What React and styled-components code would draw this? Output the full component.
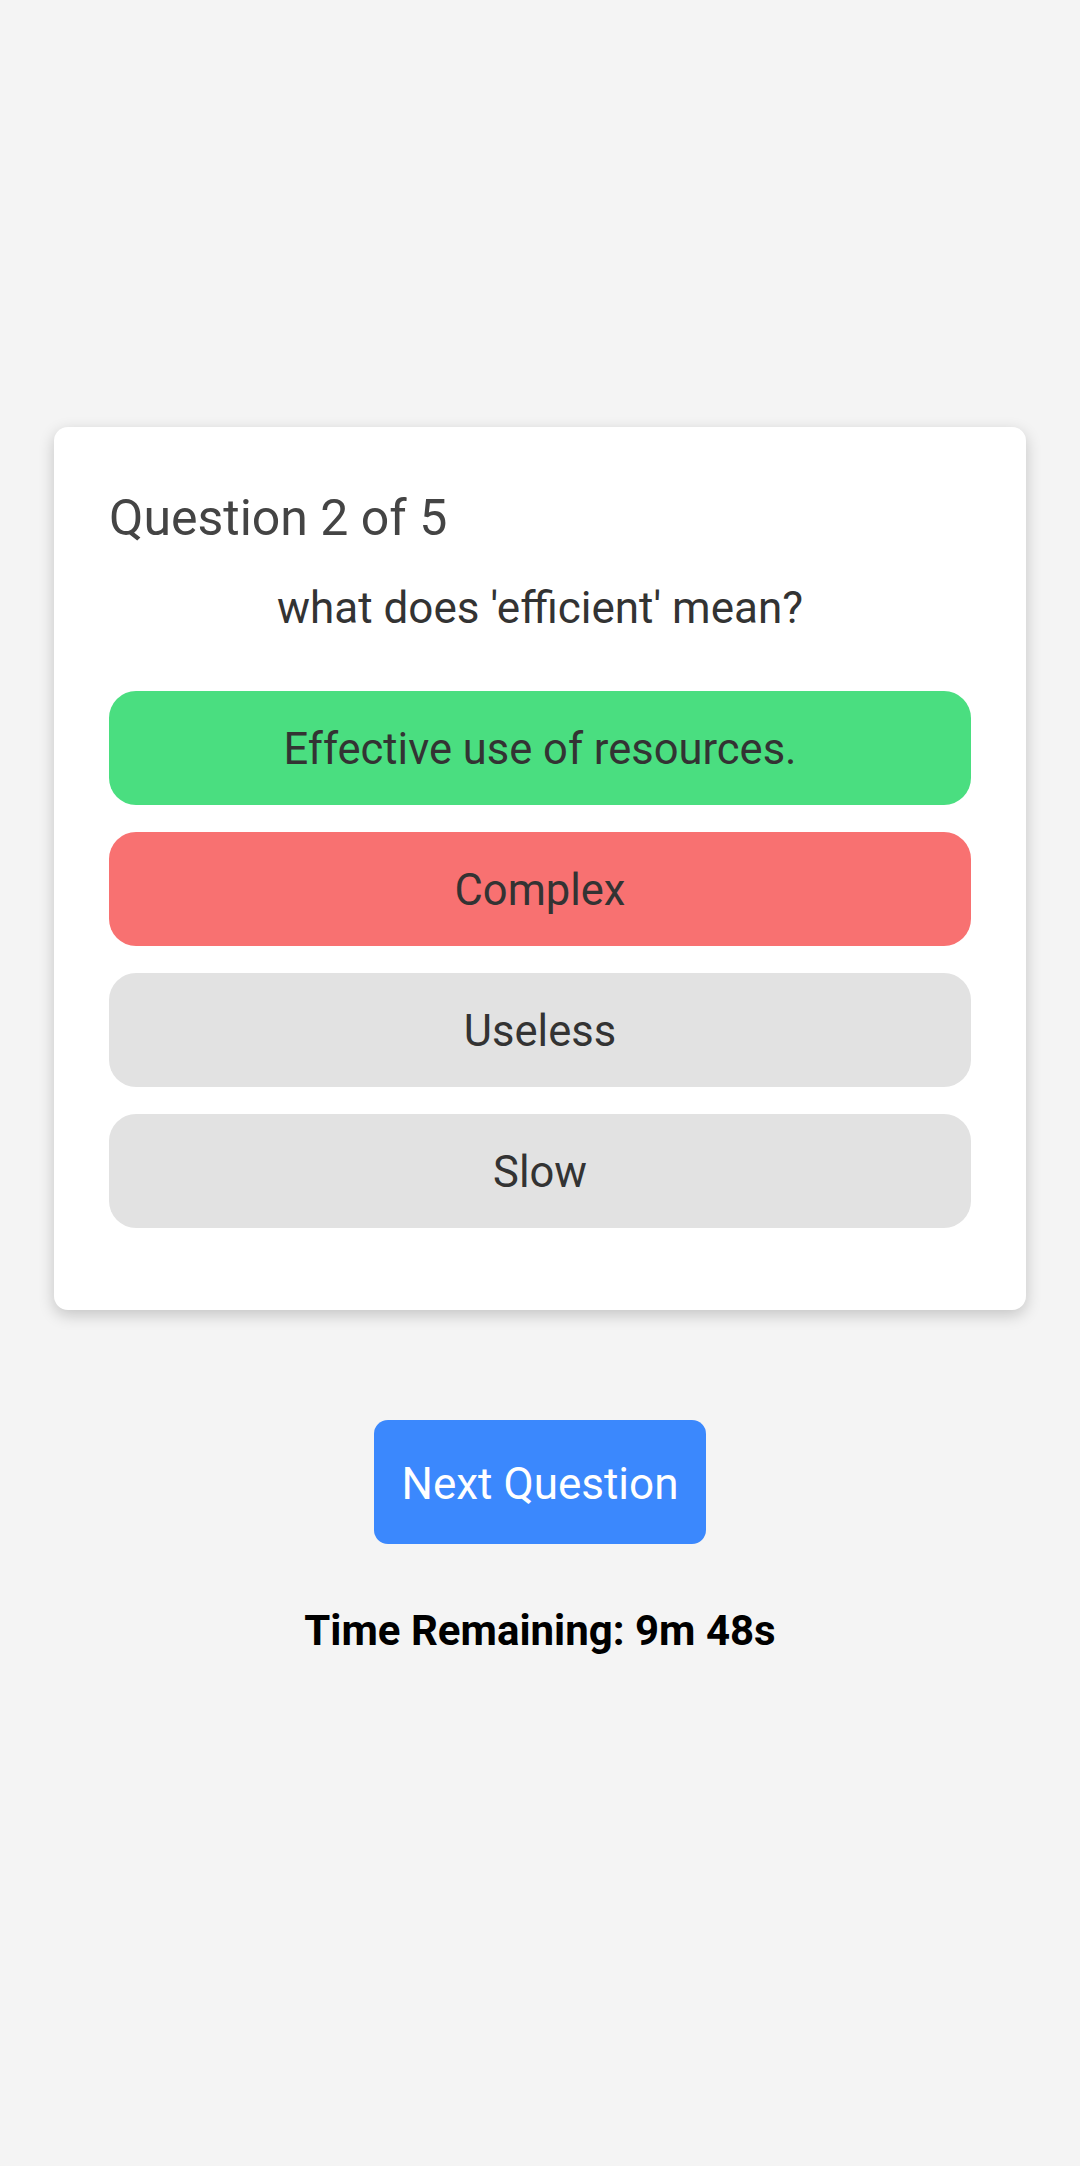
import React from "react";
import styled, { createGlobalStyle } from "styled-components";

const GlobalStyle = createGlobalStyle`
  html, body {
    margin: 0;
    padding: 0;
    background: #f4f4f4;
    font-family: Roboto, "Noto Sans", "Liberation Sans", sans-serif;
  }
  * { box-sizing: border-box; }
`;

const Page = styled.main`
  min-height: 100vh;
  display: flex;
  flex-direction: column;
  align-items: center;
  justify-content: center;
  padding: 0 54px;
`;

const Card = styled.section`
  width: 100%;
  background: #ffffff;
  border-radius: 14px;
  box-shadow: 0 5px 16px rgba(0, 0, 0, 0.2);
  padding: 60px 55px 82px;
`;

const Title = styled.h2`
  margin: 0 0 32px;
  font-size: 50px;
  line-height: 62px;
  font-weight: 400;
  color: #444444;
`;

const QuestionText = styled.p`
  margin: 0 0 55px;
  font-size: 44px;
  line-height: 55px;
  text-align: center;
  color: #333333;
`;

const Options = styled.div`
  display: flex;
  flex-direction: column;
  gap: 27px;
`;

const optionColors = {
  correct: "#4ade80",
  wrong: "#f87171",
  idle: "#e2e2e2",
};

const Option = styled.button`
  display: block;
  width: 100%;
  height: 114px;
  border: none;
  border-radius: 27px;
  background: ${(p) => optionColors[p.$state]};
  color: #333333;
  font-family: inherit;
  font-size: 43.5px;
  text-align: center;
  padding: 4px 20px 0;
  cursor: pointer;
`;

const NextButton = styled.button`
  margin-top: 110px;
  height: 124px;
  padding: 5px 28px 0;
  border: none;
  border-radius: 14px;
  background: #3b88fd;
  color: #ffffff;
  font-family: inherit;
  font-size: 44px;
  cursor: pointer;
`;

const Timer = styled.p`
  margin: 63px 0 85px;
  font-size: 42px;
  line-height: 48px;
  font-weight: 700;
  color: #000000;
`;

const options = [
  { text: "Effective use of resources.", state: "correct" },
  { text: "Complex", state: "wrong" },
  { text: "Useless", state: "idle" },
  { text: "Slow", state: "idle" },
];

export default function App() {
  return (
    <>
      <GlobalStyle />
      <Page>
        <Card>
          <Title>Question 2 of 5</Title>
          <QuestionText>what does 'efficient' mean?</QuestionText>
          <Options>
            {options.map((o) => (
              <Option key={o.text} $state={o.state}>
                {o.text}
              </Option>
            ))}
          </Options>
        </Card>
        <NextButton>Next Question</NextButton>
        <Timer>Time Remaining: 9m 48s</Timer>
      </Page>
    </>
  );
}
